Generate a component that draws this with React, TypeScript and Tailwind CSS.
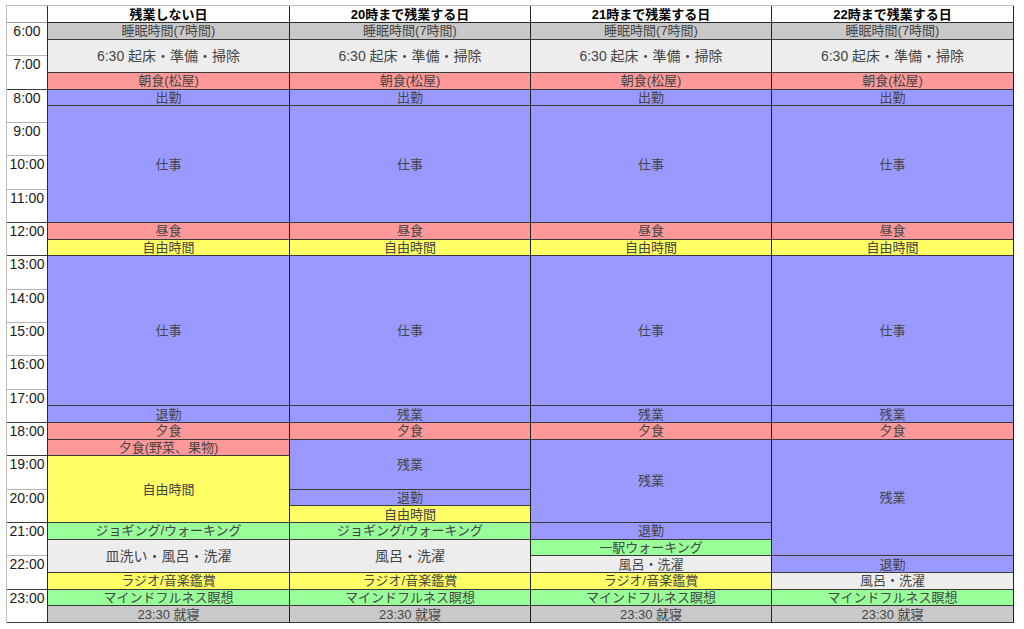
type Kind = "sleep" | "chore" | "meal" | "work" | "free" | "walk"
type Block = [number, string, Kind]

const kindBg: Record<Kind, string> = {
	sleep: "bg-[#c9c9c9]",
	chore: "bg-[#ededed]",
	meal: "bg-[#ff9999]",
	work: "bg-[#9999ff]",
	free: "bg-[#ffff66]",
	walk: "bg-[#99ff99]",
}

const spanClass: Record<number, string> = {
	1: "row-span-1",
	2: "row-span-2",
	3: "row-span-3",
	4: "row-span-4",
	5: "row-span-5",
	7: "row-span-7",
	9: "row-span-9",
}

const morning: Block[] = [
	[1, "睡眠時間(7時間)", "sleep"],
	[2, "6:30 起床・準備・掃除", "chore"],
	[1, "朝食(松屋)", "meal"],
	[1, "出勤", "work"],
	[7, "仕事", "work"],
	[1, "昼食", "meal"],
	[1, "自由時間", "free"],
	[9, "仕事", "work"],
]

const days: { title: string; blocks: Block[] }[] = [
	{
		title: "残業しない日",
		blocks: [
			...morning,
			[1, "退勤", "work"],
			[1, "夕食", "meal"],
			[1, "夕食(野菜、果物)", "meal"],
			[4, "自由時間", "free"],
			[1, "ジョギング/ウォーキング", "walk"],
			[2, "皿洗い・風呂・洗濯", "chore"],
			[1, "ラジオ/音楽鑑賞", "free"],
			[1, "マインドフルネス瞑想", "walk"],
			[1, "23:30 就寝", "sleep"],
		],
	},
	{
		title: "20時まで残業する日",
		blocks: [
			...morning,
			[1, "残業", "work"],
			[1, "夕食", "meal"],
			[3, "残業", "work"],
			[1, "退勤", "work"],
			[1, "自由時間", "free"],
			[1, "ジョギング/ウォーキング", "walk"],
			[2, "風呂・洗濯", "chore"],
			[1, "ラジオ/音楽鑑賞", "free"],
			[1, "マインドフルネス瞑想", "walk"],
			[1, "23:30 就寝", "sleep"],
		],
	},
	{
		title: "21時まで残業する日",
		blocks: [
			...morning,
			[1, "残業", "work"],
			[1, "夕食", "meal"],
			[5, "残業", "work"],
			[1, "退勤", "work"],
			[1, "一駅ウォーキング", "walk"],
			[1, "風呂・洗濯", "chore"],
			[1, "ラジオ/音楽鑑賞", "free"],
			[1, "マインドフルネス瞑想", "walk"],
			[1, "23:30 就寝", "sleep"],
		],
	},
	{
		title: "22時まで残業する日",
		blocks: [
			...morning,
			[1, "残業", "work"],
			[1, "夕食", "meal"],
			[7, "残業", "work"],
			[1, "退勤", "work"],
			[1, "風呂・洗濯", "chore"],
			[1, "マインドフルネス瞑想", "walk"],
			[1, "23:30 就寝", "sleep"],
		],
	},
]

// rows where a block of the first day ends -> the hour line there is drawn dark
const firstDayEnds = new Set<number>()
days[0].blocks.reduce((acc, [span]) => {
	firstDayEnds.add(acc + span)
	return acc + span
}, 0)

const hours = Array.from({ length: 18 }, (_, i) => i + 6)

const font = "font-['Liberation_Sans','Noto_Sans_CJK_JP',sans-serif]"

function TimeColumn() {
	return (
		<div className="flex w-[41px] flex-col border-r border-[#2a2a2a] bg-white">
			<div className="h-[17px] border-b border-[#9a9a9a]" />
			<div className="grid h-[600px] grid-rows-[repeat(18,minmax(0,1fr))]">
				{hours.map((h, i) => (
					<div
						key={h}
						className={`border-b text-center text-[14px] leading-[16px] text-[#1a1a1a] ${
							firstDayEnds.has((i + 1) * 2)
								? "border-[#3a3a3a]"
								: "border-[#b4b4b4]"
						}`}
					>
						{h}:00
					</div>
				))}
			</div>
		</div>
	)
}

function DayColumn({ title, blocks }: { title: string; blocks: Block[] }) {
	return (
		<div className="flex w-[242px] flex-col border-r border-[#1f1f1f] [&:nth-child(3)]:w-[241px] [&:nth-child(4)]:w-[241px]">
			<div className="flex h-[17px] items-center justify-center border-b border-[#2a2a2a] bg-white text-[13px] font-bold leading-none text-black">
				{title}
			</div>
			<div className="grid h-[600px] grid-rows-[repeat(36,minmax(0,1fr))]">
				{blocks.map(([span, label, kind], i) => (
					<div
						key={i}
						className={`flex items-center justify-center border-b border-[#3a3a3a] leading-none text-[#454545] ${
							kind === "chore" && span === 2 ? "text-[14px]" : "text-[13px]"
						} ${spanClass[span]} ${kindBg[kind]}`}
					>
						{label}
					</div>
				))}
			</div>
		</div>
	)
}

export default function App() {
	return (
		<div className={`min-h-screen bg-white pl-[6px] pt-[5px] ${font}`}>
			<div className="flex w-fit border-l border-t border-[#bdbdbd]">
				<TimeColumn />
				{days.map(d => (
					<DayColumn
						key={d.title}
						title={d.title}
						blocks={d.blocks}
					/>
				))}
			</div>
		</div>
	)
}
